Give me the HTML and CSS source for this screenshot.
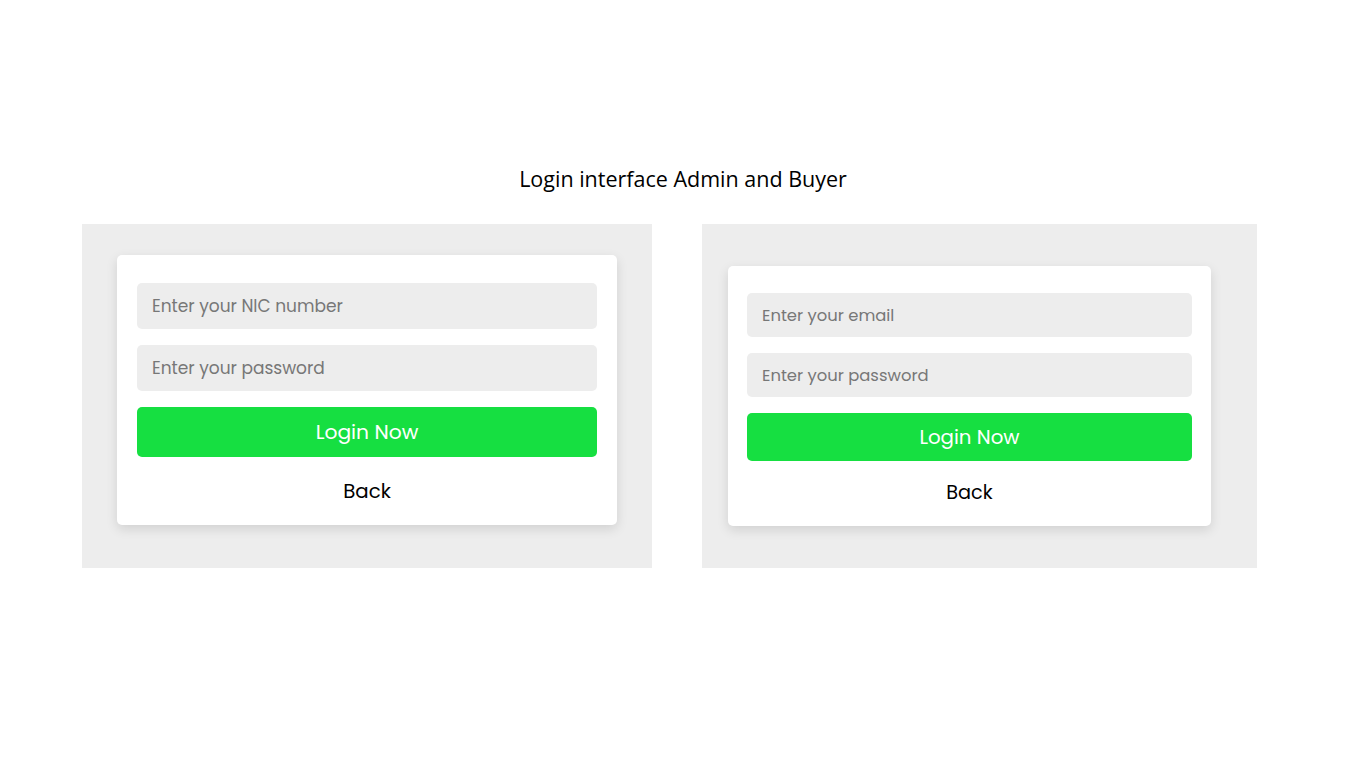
FILE: index.html
```html
<!DOCTYPE html>
<html lang="en">
<head>
<meta charset="utf-8">
<title>Login interface Admin and Buyer</title>
<link rel="stylesheet" href="styles.css">
</head>
<body>
<main class="page">
  <h1 class="title">Login interface Admin and Buyer</h1>
  <div class="panels">
    <section class="panel panel-admin">
      <form class="card card-admin">
        <input class="field" type="text" placeholder="Enter your NIC number">
        <input class="field" type="password" placeholder="Enter your password">
        <button class="btn" type="button">Login Now</button>
        <a class="back" href="#">Back</a>
      </form>
    </section>
    <section class="panel panel-buyer">
      <form class="card card-buyer">
        <input class="field" type="email" placeholder="Enter your email">
        <input class="field" type="password" placeholder="Enter your password">
        <button class="btn" type="button">Login Now</button>
        <a class="back" href="#">Back</a>
      </form>
    </section>
  </div>
</main>
</body>
</html>
```
FILE: styles.css
```css
* { box-sizing: border-box; }
html, body { margin: 0; padding: 0; background: #fff; }
body { font-family: "Poppins", "Open Sans", "Noto Sans", sans-serif; }

.page {
  padding-top: 164px;
}

.title {
  margin: 0;
  text-align: center;
  font-family: "Open Sans", "Liberation Sans", sans-serif;
  font-weight: 400;
  font-size: 21.5px;
  line-height: 30px;
  color: #000;
}

.panels {
  display: flex;
  gap: 50px;
  margin-top: 30px;
  margin-left: 82px;
}

.panel {
  background: #ededed;
  height: 344px;
  display: flex;
  align-items: flex-start;
}

.panel-admin {
  width: 570px;
  padding: 31px 35px 0 35px;
}

.panel-buyer {
  width: 555px;
  padding: 42px 0 0 26px;
}

.card {
  background: #fff;
  border-radius: 5px;
  box-shadow: 0 4px 12px rgba(0, 0, 0, 0.12);
  display: flex;
  flex-direction: column;
  gap: 16px;
}

.card-admin {
  width: 500px;
  padding: 28px 20px 20px;
}

.card-buyer {
  width: 483px;
  padding: 27px 19px 19px;
}

.field {
  width: 100%;
  border: none;
  outline: none;
  background: #ededed;
  border-radius: 5px;
  padding: 0 15px;
  font-family: inherit;
  color: #333;
}

.field::placeholder { color: #777; }

.card-admin .field { height: 46px; font-size: 17px; }
.card-buyer .field { height: 44px; font-size: 16.4px; }

.btn {
  width: 100%;
  border: none;
  border-radius: 5px;
  background: #16df41;
  color: #fff;
  font-family: inherit;
  cursor: pointer;
}

.card-admin .btn { height: 50px; font-size: 20.3px; }
.card-buyer .btn { height: 48px; font-size: 19.8px; }

.back {
  display: block;
  text-align: center;
  color: #000;
  text-decoration: none;
  line-height: 28px;
}

.card-admin .back { margin-top: 4px; font-size: 19.8px; }
.card-buyer .back { margin-top: 2px; font-size: 19.3px; }
```
